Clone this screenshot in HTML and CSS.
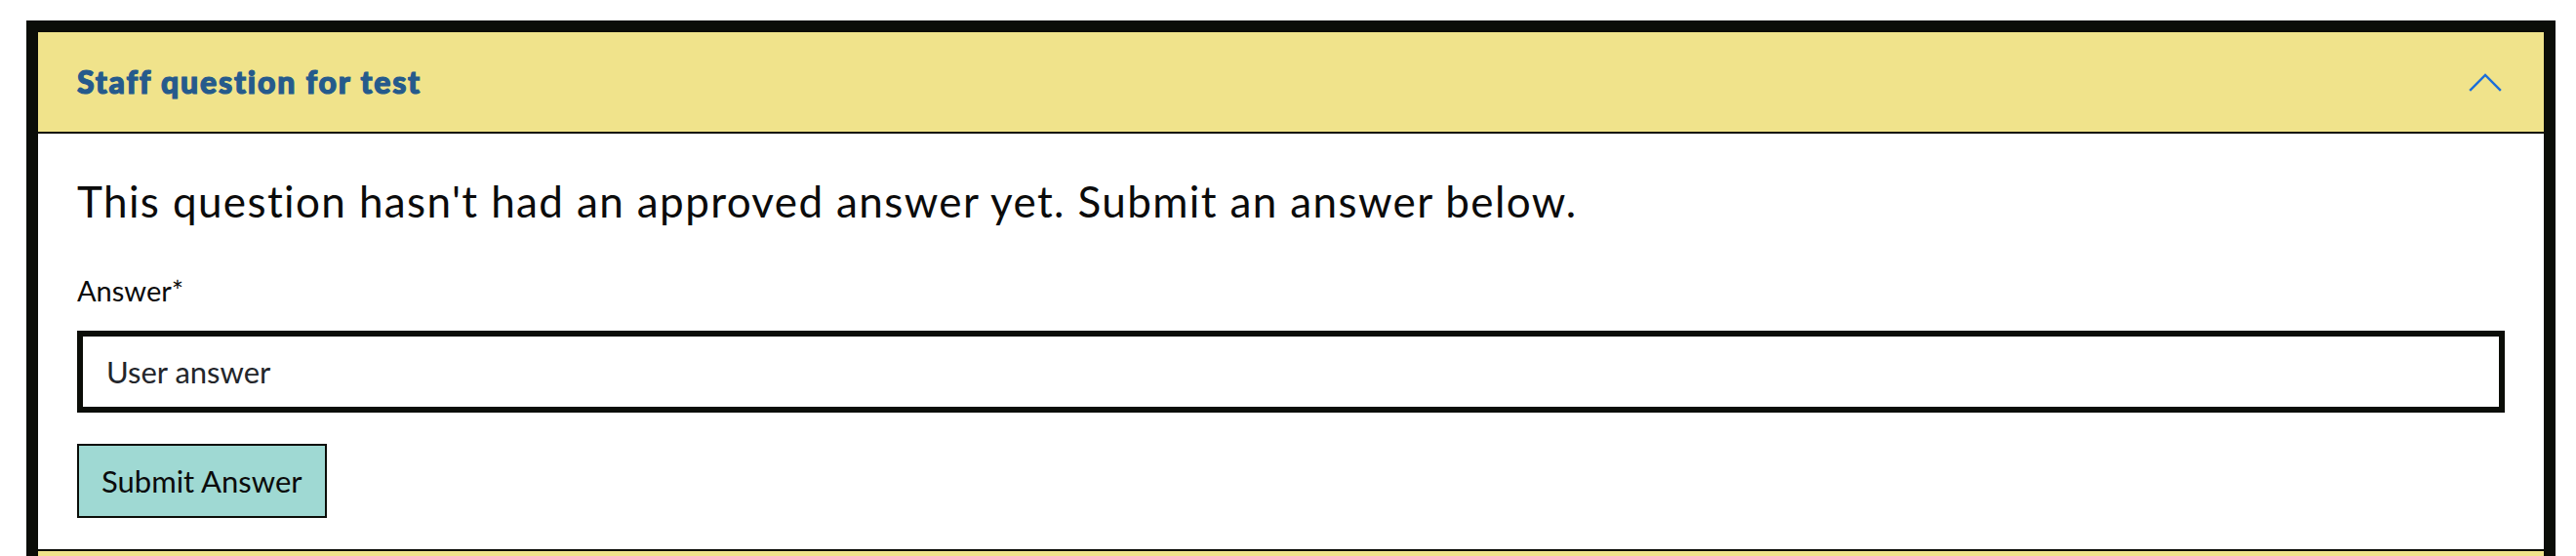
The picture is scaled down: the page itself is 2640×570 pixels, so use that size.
FILE: index.html
```html
<!DOCTYPE html>
<html lang="en">
<head>
<meta charset="utf-8">
<title>Staff question</title>
<link rel="stylesheet" href="styles.css">
</head>
<body>
<div class="page">
  <div class="accordion">
    <section class="item is-open">
      <header class="item-header">
        <h2 class="item-title">Staff question for test</h2>
        <svg class="chevron" width="32" height="17" viewBox="0 0 32 17" aria-hidden="true">
          <polyline points="1,16 16,1 31,16" fill="none" stroke="currentColor" stroke-width="2.4" stroke-linecap="square" stroke-linejoin="miter"/>
        </svg>
      </header>
      <div class="item-body">
        <p class="notice">This question hasn't had an approved answer yet. Submit an answer below.</p>
        <form class="answer-form">
          <div class="field">
            <label class="field-label" for="answer">Answer*</label>
            <input class="field-input" id="answer" type="text" value="User answer">
          </div>
          <button class="submit-btn" type="button">Submit Answer</button>
        </form>
      </div>
    </section>
    <section class="item">
      <header class="item-header"></header>
    </section>
  </div>
</div>
</body>
</html>
```
FILE: styles.css
```css
html, body {
  margin: 0;
  padding: 0;
  background: #ffffff;
}

body {
  font-family: "Lato", "Liberation Sans", sans-serif;
  color: #0b0b0b;
  overflow: hidden;
}

.page {
  padding: 21px 21px 0 27px;
}

.accordion {
  border: 12px solid #0b0d08;
  border-bottom: 0;
}

.item-header {
  display: flex;
  align-items: center;
  justify-content: space-between;
  height: 102px;
  padding: 0 44px 0 40px;
  background: #f0e38b;
  border-bottom: 2px solid #0b0d08;
  box-sizing: content-box;
}

.item-title {
  margin: 0;
  font-family: "Lato", sans-serif;
  font-weight: 900;
  font-size: 32px;
  line-height: 1.2;
  color: #255a8c;
  letter-spacing: 1.8px;
  -webkit-text-stroke: 1.2px #255a8c;
}

.chevron {
  display: block;
  color: #1b6fd9;
  overflow: visible;
}

.item-body {
  padding: 43px 40px 32px;
  background: #ffffff;
  border-bottom: 2px solid #0b0d08;
}

.notice {
  margin: 0 0 48px;
  font-size: 44px;
  line-height: 1.2;
  font-weight: 400;
  letter-spacing: 1.38px;
  color: #0b0b0b;
}

.answer-form {
  display: flex;
  flex-direction: column;
  align-items: flex-start;
  gap: 32px;
}

.field {
  display: flex;
  flex-direction: column;
  gap: 23px;
  width: 100%;
}

.field-label {
  font-size: 29px;
  line-height: 1.2;
  color: #0b0b0b;
}

.field-input {
  box-sizing: border-box;
  width: 100%;
  height: 84px;
  margin: 0;
  padding: 0 24px;
  border: 6px solid #0b0d08;
  border-radius: 0;
  background: #ffffff;
  font-family: "Lato", sans-serif;
  font-size: 31px;
  color: #23262b;
  outline: none;
}

.submit-btn {
  box-sizing: border-box;
  height: 76px;
  margin: 0;
  padding: 0 23px;
  border: 2px solid #0b0d08;
  border-radius: 0;
  background: #9fd9d3;
  font-family: "Lato", sans-serif;
  font-size: 31px;
  color: #0b0b0b;
  cursor: pointer;
}
```
